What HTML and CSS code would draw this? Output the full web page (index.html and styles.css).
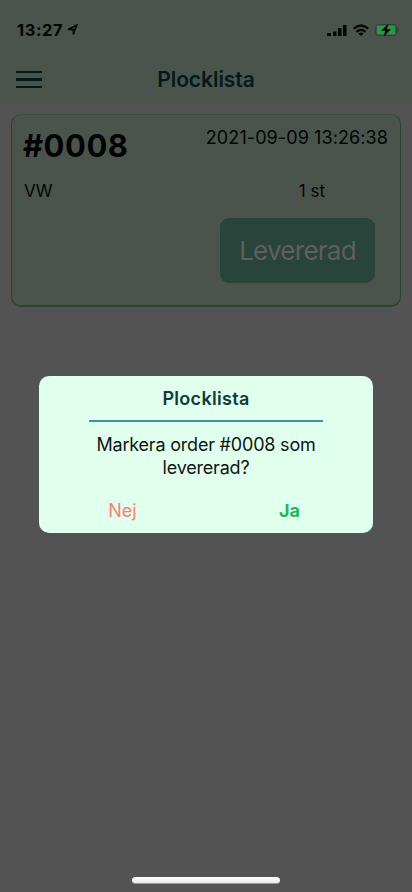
FILE: index.html
```html
<!DOCTYPE html>
<html lang="sv">
<head>
<meta charset="utf-8">
<title>Plocklista</title>
<link rel="stylesheet" href="styles.css">
</head>
<body>
<div class="screen">
  <header class="header">
    <div class="status">
      <div class="clock"><span>13:27</span>
        <svg width="11" height="12" viewBox="0 0 11 12"><path d="M1.2 5.4 9.6 1.2 6.4 10.6V5.6Z" fill="none" stroke="#050807" stroke-width="1.7"/></svg>
      </div>
      <div class="indicators">
        <svg width="20" height="13" viewBox="0 0 20 13"><path d="M0 9h4v3H0zM6 7.5h3.5V12H6zM11 4h3.5v8H11zM16 1h3.5v11H16z" fill="#020403"/></svg>
        <svg class="wifi" width="16" height="13" viewBox="0 0 16 13" fill="none" stroke="#050807" stroke-width="2.3"><path d="M.8 4.7Q8-1.7 15.2 4.7M3.5 7.9Q8 3.8 12.5 7.9"/><path d="M5.2 9.5Q8 7.6 10.8 9.5L8 12Z" fill="#050807" stroke="none"/></svg>
        <svg width="25" height="14" viewBox="0 0 25 14"><rect x=".7" y="1.5" width="20.6" height="11" rx="2.5" fill="none" stroke="#343f38"/><rect x="2" y="2.8" width="18" height="8.4" rx="1" fill="#2a9847"/><path d="M22.2 3.8q3 3.2 0 6.4z" fill="#343f38"/><path d="M13.5.5 6.3 7.8h4L8.8 13.6 16 6.2h-4Z" fill="#020403"/></svg>
      </div>
    </div>
    <div class="bar">
      <div class="menu"><i></i><i></i><i></i></div>
      <h1>Plocklista</h1>
    </div>
  </header>
  <main class="card">
    <div class="row top"><strong>#0008</strong><span class="date">2021-09-09 13:26:38</span></div>
    <div class="row item"><span class="car">VW</span><span class="qty">1 st</span></div>
    <div class="button">Levererad</div>
  </main>
  <section class="dialog">
    <h2>Plocklista</h2>
    <p>Markera order #0008 som<br>levererad?</p>
    <div class="actions"><span class="no">Nej</span><span class="yes">Ja</span></div>
  </section>
  <div class="home"></div>
</div>
</body>
</html>
```
FILE: styles.css
```css
* { box-sizing: border-box; }
body { margin: 0; font-family: Inter, "Liberation Sans", sans-serif; }
h1, h2, p { margin: 0; }
svg { display: block; }
.screen { position: relative; width: 412px; height: 892px; overflow: hidden; background: #535353; }
.header { height: 104px; background: #4a544d; padding-top: 20px; }
.status { height: 20px; display: flex; justify-content: space-between; align-items: center; padding: 0 12px 0 17px; }
.clock { display: flex; align-items: center; gap: 4px; font-size: 16.5px; line-height: 20px; font-weight: 700; letter-spacing: 0.6px; color: #020403; }
.indicators { display: flex; align-items: center; gap: 6px; }
.bar { height: 40px; margin-top: 20px; position: relative; display: flex; align-items: center; justify-content: center; }
.menu { position: absolute; left: 16px; top: 11px; width: 26px; display: flex; flex-direction: column; gap: 5px; }
.menu i { height: 2px; background: #06191a; }
.menu i:nth-child(2) { height: 3px; }
h1 { font-size: 21px; line-height: 26px; font-weight: 600; letter-spacing: -0.05px; color: #06191a; }
.card { width: 390px; height: 193px; margin: 10px 0 0 11px; border: 1px solid #25472d; border-bottom-width: 2px; border-top-color: #3a4d40; border-radius: 10px; background: #4a544d; padding: 11px 12px 0 11px; color: #020403; }
.row { display: flex; justify-content: space-between; }
.top { height: 54px; }
.top strong { font-size: 31px; line-height: 40px; font-weight: 700; letter-spacing: 0.5px; }
.date { font-size: 18px; line-height: 24px; letter-spacing: 0.09px; }
.item { height: 22px; font-size: 17px; line-height: 22px; }
.car { padding-left: 1px; }
.qty { margin-right: 63px; }
.button { width: 155px; height: 65px; margin: 16px 13px 0 auto; border-radius: 9px; background: #28443b; color: #625e60; font-size: 26px; line-height: 65px; letter-spacing: -0.75px; text-align: center; }
.dialog { position: absolute; left: 39px; top: 376px; width: 334px; height: 157px; border-radius: 10px; background: #e1ffed; text-align: center; padding: 11px 50px 0; }
h2 { height: 35px; border-bottom: 2px solid #37969a; font-size: 18px; line-height: 24px; font-weight: 600; letter-spacing: 0.3px; color: #12383b; }
.dialog p { margin-top: 11px; font-size: 18px; line-height: 23px; letter-spacing: -0.2px; color: #101512; white-space: nowrap; }
.actions { display: flex; justify-content: space-between; margin: 20px -50px 0; font-size: 18px; line-height: 24px; }
.actions span { width: 50%; }
.no { color: #fa8072; }
.yes { color: #1eb85a; font-weight: 700; }
.home { position: absolute; left: 132px; top: 877px; width: 148px; height: 7px; border-radius: 4px; background: linear-gradient(#fff, #e8e8e8); border-bottom: 1px solid #999; }
```
